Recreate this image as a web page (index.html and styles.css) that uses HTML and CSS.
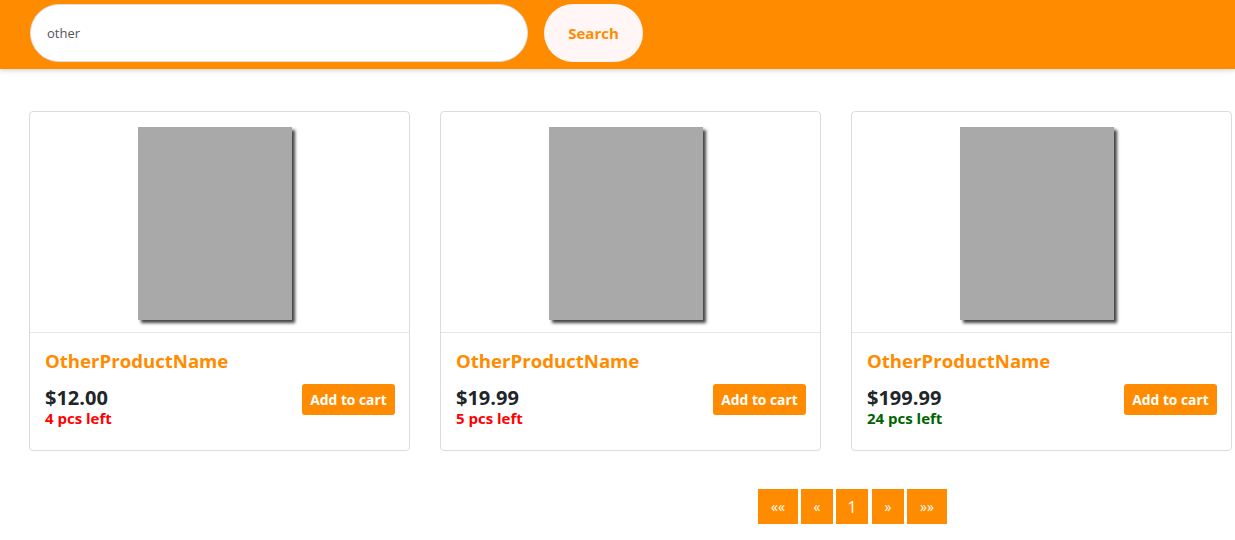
FILE: index.html
```html
<!DOCTYPE html>
<html>
<head>
<meta charset="utf-8">
<link rel="stylesheet" href="styles.css">
</head>
<body>
<header class="topbar">
  <div class="search-field">other</div>
  <button class="search-btn">Search</button>
</header>
<main class="content">
  <div class="cards">
    <div class="card">
      <div class="card-img"><div class="thumb"></div></div>
      <div class="card-body">
        <div class="name">OtherProductName</div>
        <div class="row">
          <div>
            <div class="price">$12.00</div>
            <div class="stock low">4 pcs left</div>
          </div>
          <button class="cart-btn">Add to cart</button>
        </div>
      </div>
    </div>
    <div class="card">
      <div class="card-img"><div class="thumb"></div></div>
      <div class="card-body">
        <div class="name">OtherProductName</div>
        <div class="row">
          <div>
            <div class="price">$19.99</div>
            <div class="stock low">5 pcs left</div>
          </div>
          <button class="cart-btn">Add to cart</button>
        </div>
      </div>
    </div>
    <div class="card">
      <div class="card-img"><div class="thumb"></div></div>
      <div class="card-body">
        <div class="name">OtherProductName</div>
        <div class="row">
          <div>
            <div class="price">$199.99</div>
            <div class="stock ok">24 pcs left</div>
          </div>
          <button class="cart-btn">Add to cart</button>
        </div>
      </div>
    </div>
  </div>
  <nav class="pager">
    <span class="pg wide">««</span>
    <span class="pg">«</span>
    <span class="pg num">1</span>
    <span class="pg next">»</span>
    <span class="pg wide">»»</span>
  </nav>
</main>
</body>
</html>
```
FILE: styles.css
```css
* { box-sizing: border-box; }
html, body { margin: 0; padding: 0; background: #fff; overflow: hidden; }
body { font-family: "Open Sans", "Noto Sans", sans-serif; color: #212529; }

.topbar {
  height: 69px;
  background: #ff8c00;
  display: flex;
  align-items: flex-start;
  padding: 4px 0 0 30px;
  gap: 16px;
  box-shadow: 0 2px 4px rgba(0,0,0,0.15);
}
.search-field {
  width: 498px;
  height: 58px;
  border-radius: 29px;
  background: #fff;
  border: 1px solid #ddd;
  padding-left: 16px;
  display: flex;
  align-items: center;
  font-size: 13px;
  color: #555;
}
.search-btn {
  width: 99px;
  height: 58px;
  border-radius: 29px;
  border: none;
  background: #fff6f5;
  color: #ff8c00;
  font-family: inherit;
  font-weight: 700;
  font-size: 15px;
}

.content { padding: 42px 0 0 29px; }
.cards { display: flex; gap: 30px; }
.card {
  width: 381px;
  height: 340px;
  border: 1px solid #dcdcdc;
  border-radius: 4px;
  display: flex;
  flex-direction: column;
}
.card-img {
  height: 221px;
  border-bottom: 1px solid #e6e6e6;
  padding: 15px 0 0 108px;
}
.thumb {
  width: 154px;
  height: 193px;
  background: #a9a9a9;
  box-shadow: 3px 3px 3px #444;
}
.card-body { padding: 15px 14px 0 15px; }
.name {
  color: #ff8c00;
  font-weight: 700;
  font-size: 18.6px;
  line-height: 26px;
}
.row {
  margin-top: 12px;
  display: flex;
  justify-content: space-between;
  align-items: flex-start;
}
.price { font-weight: 700; font-size: 20px; line-height: 24px; }
.stock { font-weight: 700; font-size: 15px; line-height: 17px; }
.low { color: #f00; }
.ok { color: #006400; }
.cart-btn {
  margin-top: -2px;
  width: 93px;
  height: 31px;
  background: #ff8c00;
  color: #fff;
  border: none;
  border-radius: 3px;
  font-family: inherit;
  font-weight: 700;
  font-size: 13.8px;
}

.pager {
  display: flex;
  gap: 3px;
  margin: 38px 0 0 729px;
}
.pg {
  height: 35px;
  width: 32px;
  background: #ff8c00;
  color: #fff;
  display: flex;
  align-items: center;
  justify-content: center;
  font-size: 14px;
}
.pg.wide { width: 40px; }
.pg.num { font-size: 16px; }
.pg.next { margin-left: 1px; }
```
